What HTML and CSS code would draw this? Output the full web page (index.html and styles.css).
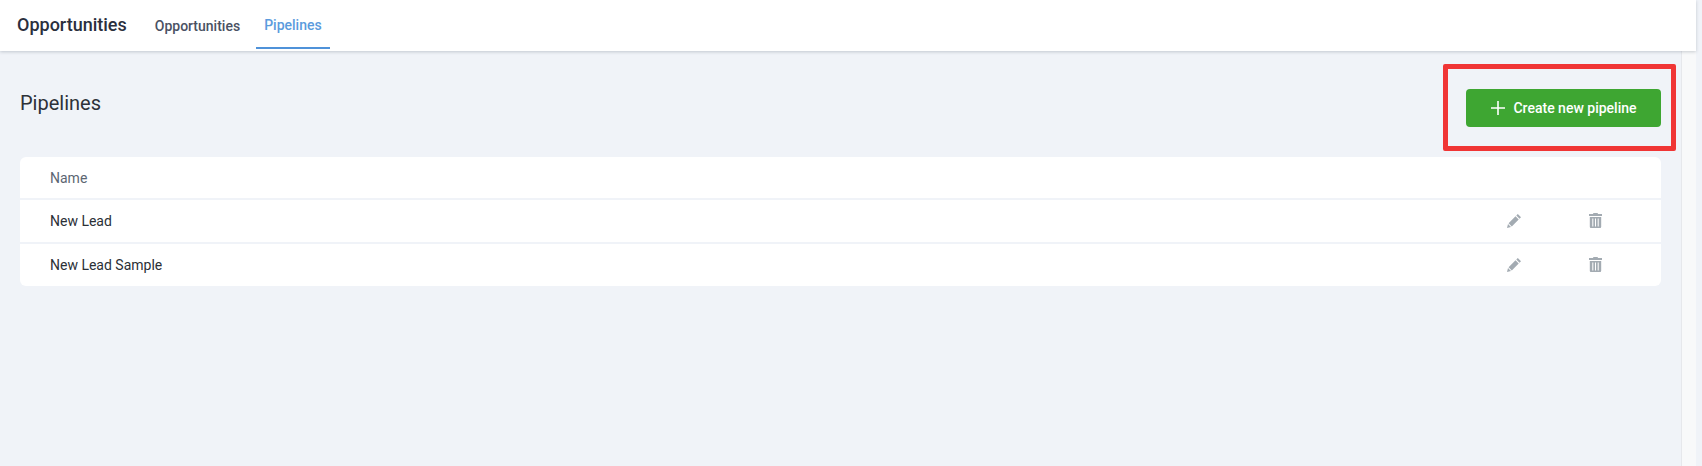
FILE: index.html
```html
<!DOCTYPE html>
<html lang="en">
<head>
<meta charset="utf-8">
<title>Pipelines</title>
<link rel="stylesheet" href="styles.css">
</head>
<body>
<div class="app">
  <header class="topbar">
    <h1 class="brand">Opportunities</h1>
    <nav class="tabs">
      <a class="tab">Opportunities</a>
      <a class="tab active">Pipelines</a>
    </nav>
  </header>
  <div class="body-row">
    <main class="content">
      <div class="page-head">
        <h2 class="page-title">Pipelines</h2>
        <button class="btn-create">
          <svg class="plus" width="16" height="16" viewBox="0 0 16 16"><path d="M8 1v14M1 8h14" stroke="#fff" stroke-width="1.6" fill="none"/></svg>
          Create new pipeline
        </button>
      </div>
      <div class="table">
        <div class="row head"><span class="name">Name</span></div>
        <div class="row">
          <span class="name">New Lead</span>
          <span class="act edit"><svg width="14" height="14" viewBox="0 0 14 14"><path d="M10.800 0L14 3.200 12.500 4.700 9.300 1.500zM8.500 2.300l3.200 3.200-6.900 6.900-3.200-3.200zM1 10l3 3-4 1z" fill="#a3abb2"/></svg></span>
          <span class="act trash"><svg width="13" height="15" viewBox="0 0 13 15"><path d="M4.500 0h4l.6 1H13v2H0V1h3.900zM.8 4h11.400v9.700c0 .7-.6 1.300-1.300 1.300H2.100c-.7 0-1.300-.6-1.300-1.300zM3.300 5.500v8h1v-8zM6 5.500v8h1v-8zM8.700 5.500v8h1v-8z" fill="#a3abb2" fill-rule="evenodd"/></svg></span>
        </div>
        <div class="row">
          <span class="name">New Lead Sample</span>
          <span class="act edit"><svg width="14" height="14" viewBox="0 0 14 14"><path d="M10.800 0L14 3.200 12.500 4.700 9.300 1.500zM8.500 2.300l3.200 3.200-6.900 6.900-3.200-3.200zM1 10l3 3-4 1z" fill="#a3abb2"/></svg></span>
          <span class="act trash"><svg width="13" height="15" viewBox="0 0 13 15"><path d="M4.500 0h4l.6 1H13v2H0V1h3.900zM.8 4h11.400v9.700c0 .7-.6 1.300-1.300 1.300H2.100c-.7 0-1.300-.6-1.300-1.300zM3.300 5.500v8h1v-8zM6 5.500v8h1v-8zM8.700 5.500v8h1v-8z" fill="#a3abb2" fill-rule="evenodd"/></svg></span>
        </div>
      </div>
    </main>
    <div class="scrollbar"></div>
  </div>
</div>
<div class="annotation"></div>
</body>
</html>
```
FILE: styles.css
```css
* { box-sizing: border-box; }
html, body { margin: 0; height: 100%; }
body {
  background: #f0f3f8;
  font-family: Roboto, "Liberation Sans", sans-serif;
  overflow: hidden;
}
.app {
  width: 1696px;
  height: 466px;
  display: flex;
  flex-direction: column;
}
.topbar {
  height: 51px;
  flex: none;
  background: #fff;
  box-shadow: 0 1px 3px rgba(60, 70, 90, 0.25);
  display: flex;
  align-items: stretch;
  padding-left: 17px;
  position: relative;
}
.brand {
  margin: 0 20px 0 0;
  font-size: 18px;
  font-weight: 500;
  line-height: 50px;
  color: #2a2f3d;
}
.tabs { display: flex; gap: 8px; }
.tab {
  padding: 0 8px;
  height: 49px;
  font-size: 14px;
  font-weight: 500;
  line-height: 53px;
  color: #4a5163;
}
.tab.active {
  line-height: 51px;
  color: #5b9bdd;
  border-bottom: 2px solid #4f92d9;
}
.body-row {
  flex: 1;
  display: flex;
  min-height: 0;
}
.content {
  flex: 1;
  padding: 38px 20px 0 20px;
}
.page-head {
  height: 68px;
  display: flex;
  justify-content: space-between;
  align-items: flex-start;
}
.page-title {
  margin: 0;
  font-size: 20px;
  font-weight: 400;
  line-height: 28px;
  color: #2d3138;
}
.btn-create {
  width: 195px;
  height: 38px;
  border: 0;
  border-radius: 4px;
  background: #3ea632;
  color: #fff;
  font: 500 14px Roboto, "Liberation Sans", sans-serif;
  display: flex;
  align-items: center;
  justify-content: center;
  gap: 7px;
  padding: 0;
}
.table {
  background: #fff;
  border-radius: 6px;
  overflow: hidden;
}
.row {
  height: 44px;
  display: flex;
  align-items: center;
  padding-left: 30px;
  border-bottom: 2px solid #f0f3f8;
  font-size: 14px;
  color: #2b2f36;
}
.row:last-child { border-bottom: 0; height: 42px; }
.row.head { height: 43px; color: #5c6672; }
.name { flex: 1; }
.act { display: flex; justify-content: center; }
.edit { width: 14px; margin-right: 68px; }
.trash { width: 13px; margin-right: 59px; margin-top: -1px; }
.scrollbar {
  width: 15px;
  flex: none;
  background: #f8f9fa;
  border-left: 1px solid #e6e8ec;
}
.annotation {
  position: absolute;
  left: 1443px;
  top: 64px;
  width: 233px;
  height: 87px;
  border: 5px solid #f03535;
  border-radius: 2px;
}
```
